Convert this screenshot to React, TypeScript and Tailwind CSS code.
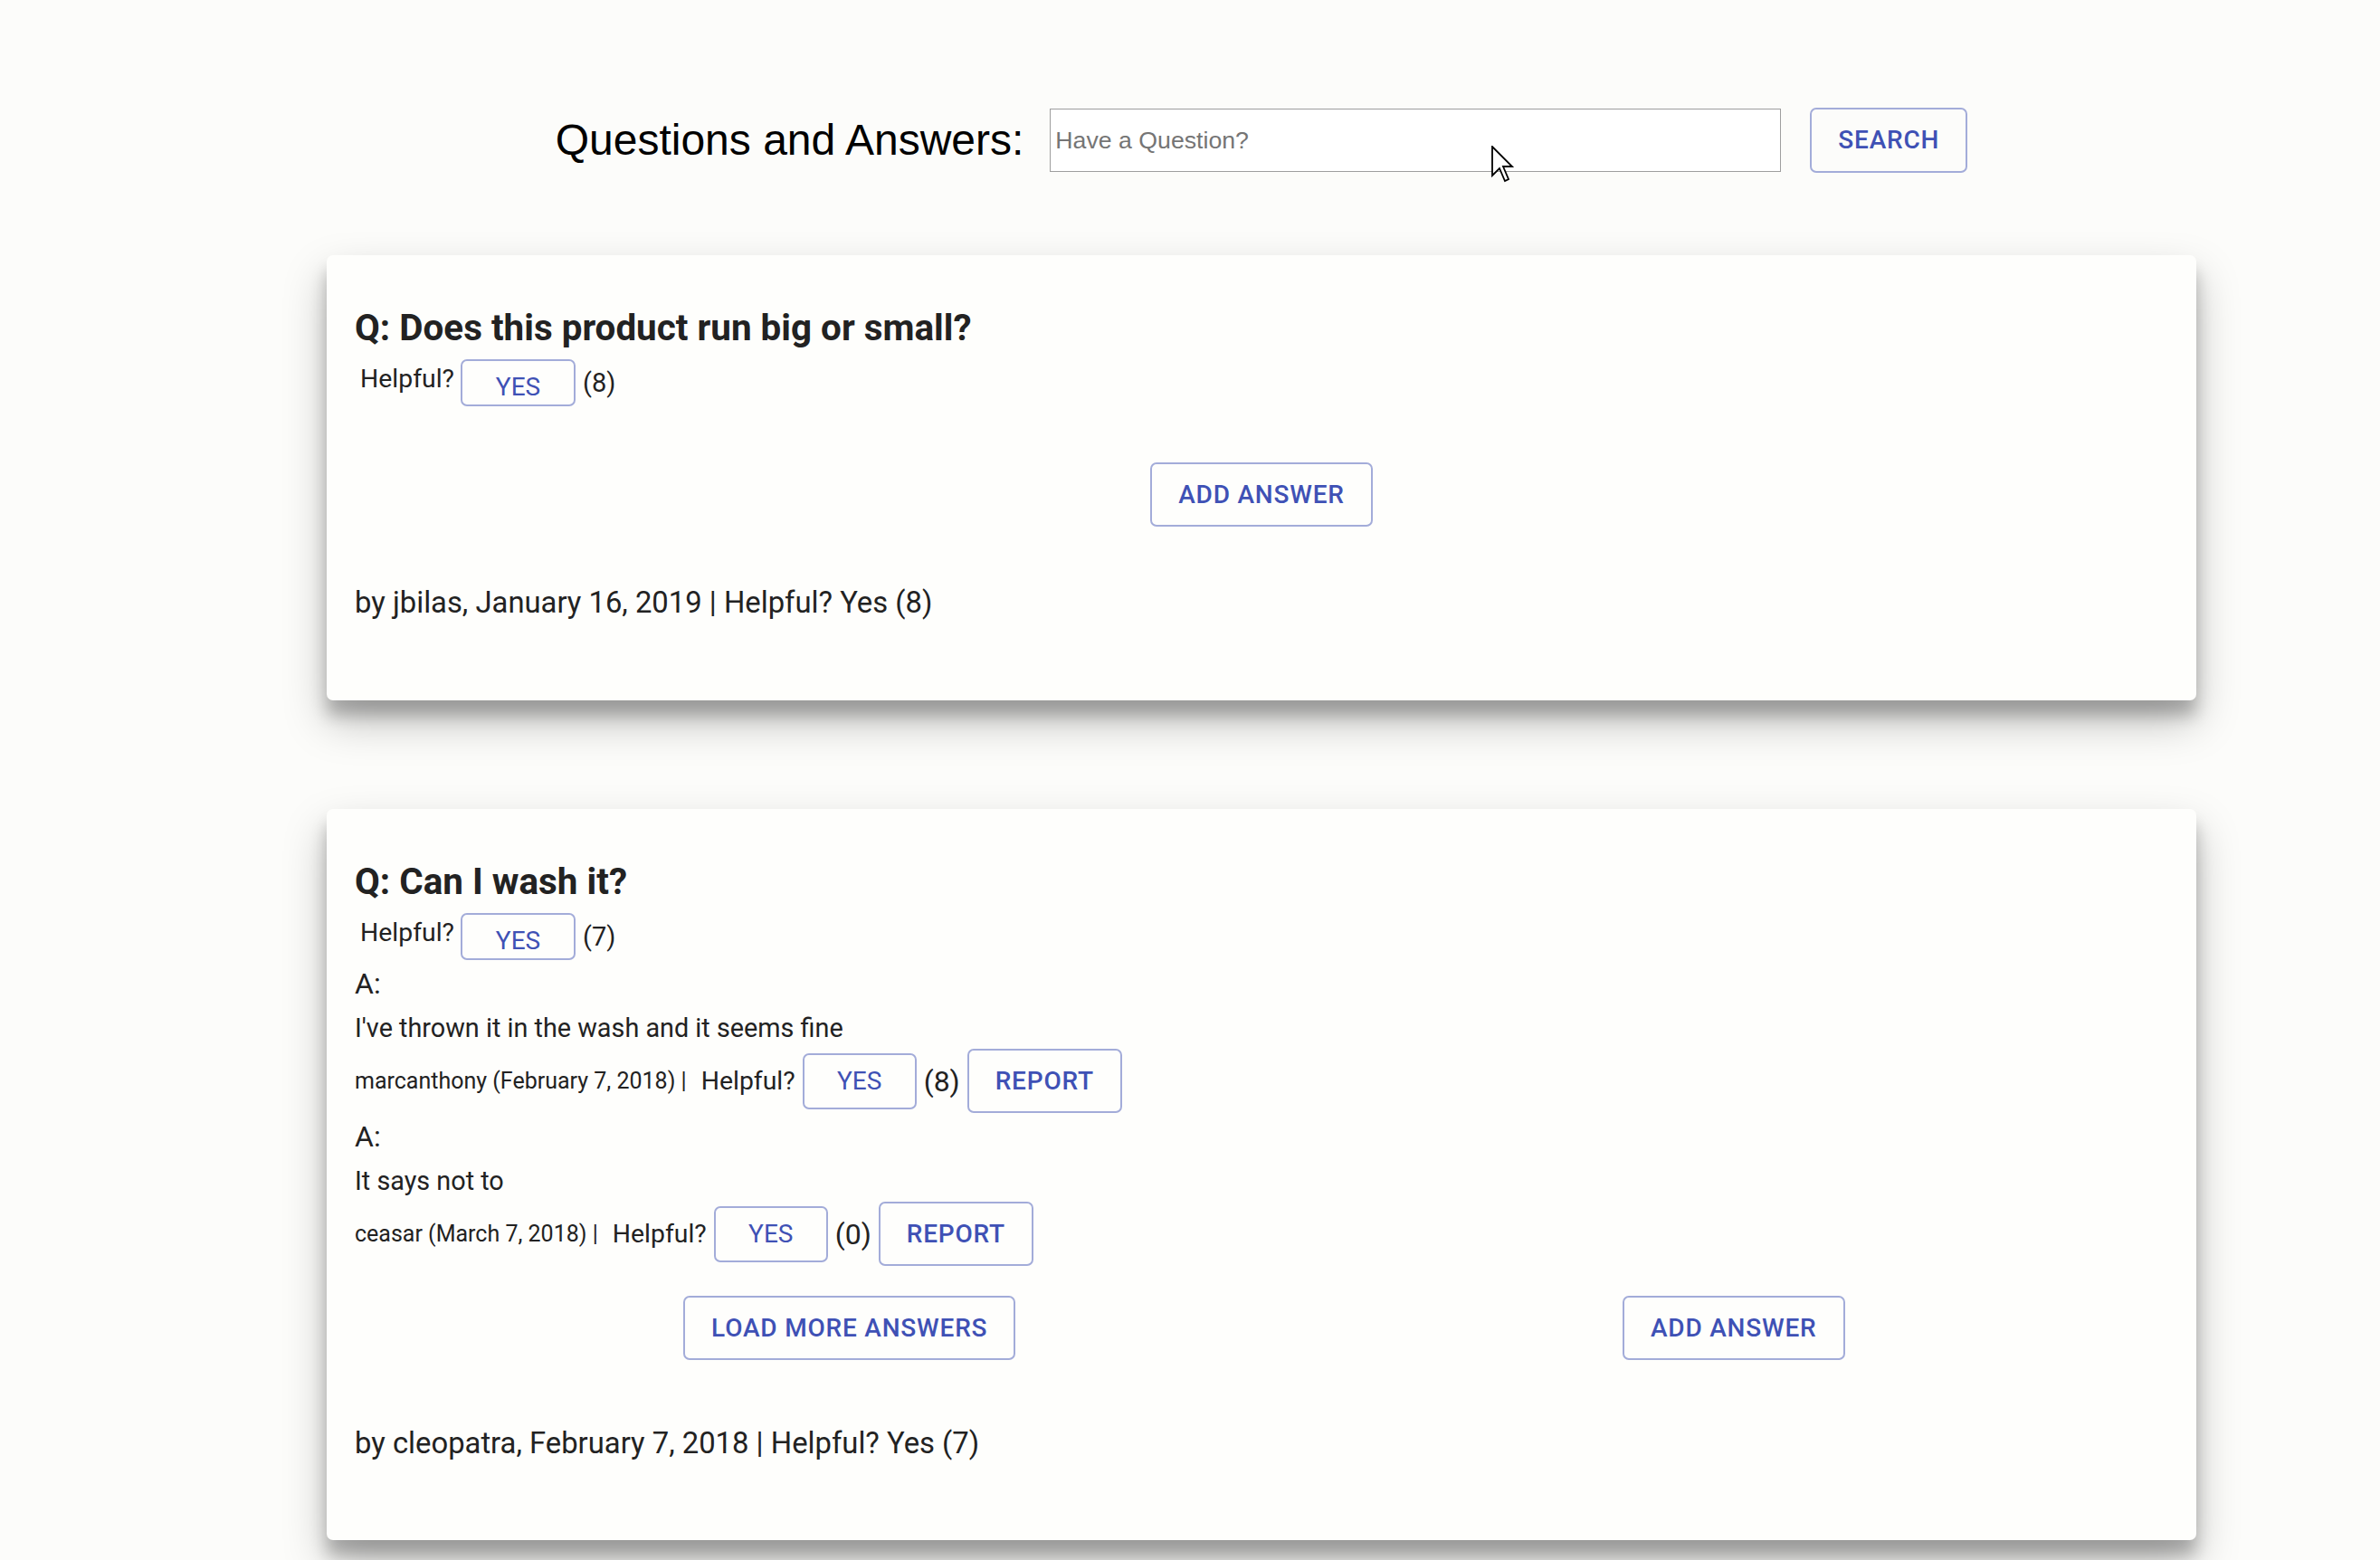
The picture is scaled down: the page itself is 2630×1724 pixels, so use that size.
import React from "react";

function OutlineButton({ label, className }: { label: string; className: string }) {
  return (
    <button
      className={
        "flex shrink-0 items-center justify-center rounded-[7px] border-2 border-[#a3acd9] bg-transparent font-['Roboto',sans-serif] text-[28px] font-medium tracking-[0.8px] text-[#3f51b5] " +
        className
      }
    >
      {label}
    </button>
  );
}

function YesButton({ className }: { className: string }) {
  return (
    <button
      className={
        "flex shrink-0 items-center justify-center rounded-[7px] border-2 border-[#a3acd9] bg-transparent text-[28px] font-normal text-[#3f51b5] " +
        className
      }
    >
      YES
    </button>
  );
}

function QuestionHeader({ q, count }: { q: string; count: number }) {
  return (
    <>
      <h2 className="h-[48px] text-[40.4px] font-bold leading-[48px] text-[#222]">Q: {q}</h2>
      <div className="mt-[10px] flex h-[52px] items-center">
        <span className="mb-[8px] ml-[6px] text-[28.4px] leading-[34px]">Helpful?</span>
        <YesButton className="ml-[7px] h-[52px] w-[127px] pt-[9px]" />
        <span className="ml-[8px] text-[29px] leading-[34px]">({count})</span>
      </div>
    </>
  );
}

function Answer({ body, meta, count }: { body: string; meta: string; count: number }) {
  return (
    <div>
      <div className="mt-[6px] h-[40px] text-[32px] leading-[40px]">A:</div>
      <div className="mt-[9px] h-[40px] text-[28.8px] leading-[40px]">{body}</div>
      <div className="mt-[3px] flex h-[71px] items-center">
        <span className="text-[25px] leading-[32px]">{meta}</span>
        <span className="ml-[16px] text-[28.4px] leading-[34px]">Helpful?</span>
        <YesButton className="ml-[8px] h-[62px] w-[126px]" />
        <span className="ml-[8px] text-[32px] leading-[36px]">({count})</span>
        <OutlineButton label="REPORT" className="ml-[8px] h-[71px] w-[171px]" />
      </div>
    </div>
  );
}

function Card({ children }: { children: React.ReactNode }) {
  return (
    <div className="rounded-[7px] bg-[#fefefc] px-[31px] pt-[57px] shadow-[0_23px_47px_rgba(0,0,0,0.25),0_17px_17px_rgba(0,0,0,0.22)]">
      {children}
    </div>
  );
}

export default function App() {
  return (
    <div className="relative min-h-[1800px] bg-[#fcfcfa] pb-[80px] font-['Roboto',sans-serif] text-[#222]">
      <div className="ml-[361px] w-[2066px] pt-[119px]">
        <header className="flex items-center justify-center">
          <h1 className="font-['Liberation_Sans',Arial,sans-serif] text-[48px] font-normal leading-none text-black">
            Questions and Answers:
          </h1>
          <input
            placeholder="Have a Question?"
            className="ml-[29px] h-[70px] w-[808px] border border-[#9e9e9e] bg-white pl-[5px] font-['Liberation_Sans',Arial,sans-serif] text-[26.7px] text-black outline-none placeholder:text-[#757575]"
          />
          <OutlineButton label="SEARCH" className="ml-[32px] h-[72px] w-[174px]" />
        </header>

        <div className="mt-[91px]">
          <Card>
            <QuestionHeader q="Does this product run big or small?" count={8} />
            <div className="mx-[25px] mt-[62px] flex justify-around">
              <OutlineButton label="ADD ANSWER" className="h-[71px] w-[246px]" />
            </div>
            <div className="mt-[64px] box-content h-[40px] pb-[88px] text-[32.8px] leading-[40px]">
              by jbilas, January 16, 2019 | Helpful? Yes (8)
            </div>
          </Card>
        </div>

        <div className="mt-[120px]">
          <Card>
            <QuestionHeader q="Can I wash it?" count={7} />
            <Answer
              body="I've thrown it in the wash and it seems fine"
              meta="marcanthony (February 7, 2018) |"
              count={8}
            />
            <Answer body="It says not to" meta="ceasar (March 7, 2018) |" count={0} />
            <div className="ml-[28px] mr-[22px] mt-[33px] flex justify-around">
              <OutlineButton label="LOAD MORE ANSWERS" className="h-[71px] w-[367px]" />
              <OutlineButton label="ADD ANSWER" className="h-[71px] w-[246px]" />
            </div>
            <div className="mt-[72px] box-content h-[40px] pb-[87px] text-[32.8px] leading-[40px]">
              by cleopatra, February 7, 2018 | Helpful? Yes (7)
            </div>
          </Card>
        </div>
      </div>

      <svg
        className="pointer-events-none absolute left-[1648px] top-[161px]"
        width="26"
        height="42"
        viewBox="-0.5 -0.5 13 21"
      >
        <polygon
          points="0,0 0,16 4,12 7,19 9,18 6,11 11,11"
          fill="white"
          stroke="black"
          strokeWidth="0.9"
          strokeLinejoin="miter"
        />
      </svg>
    </div>
  );
}
